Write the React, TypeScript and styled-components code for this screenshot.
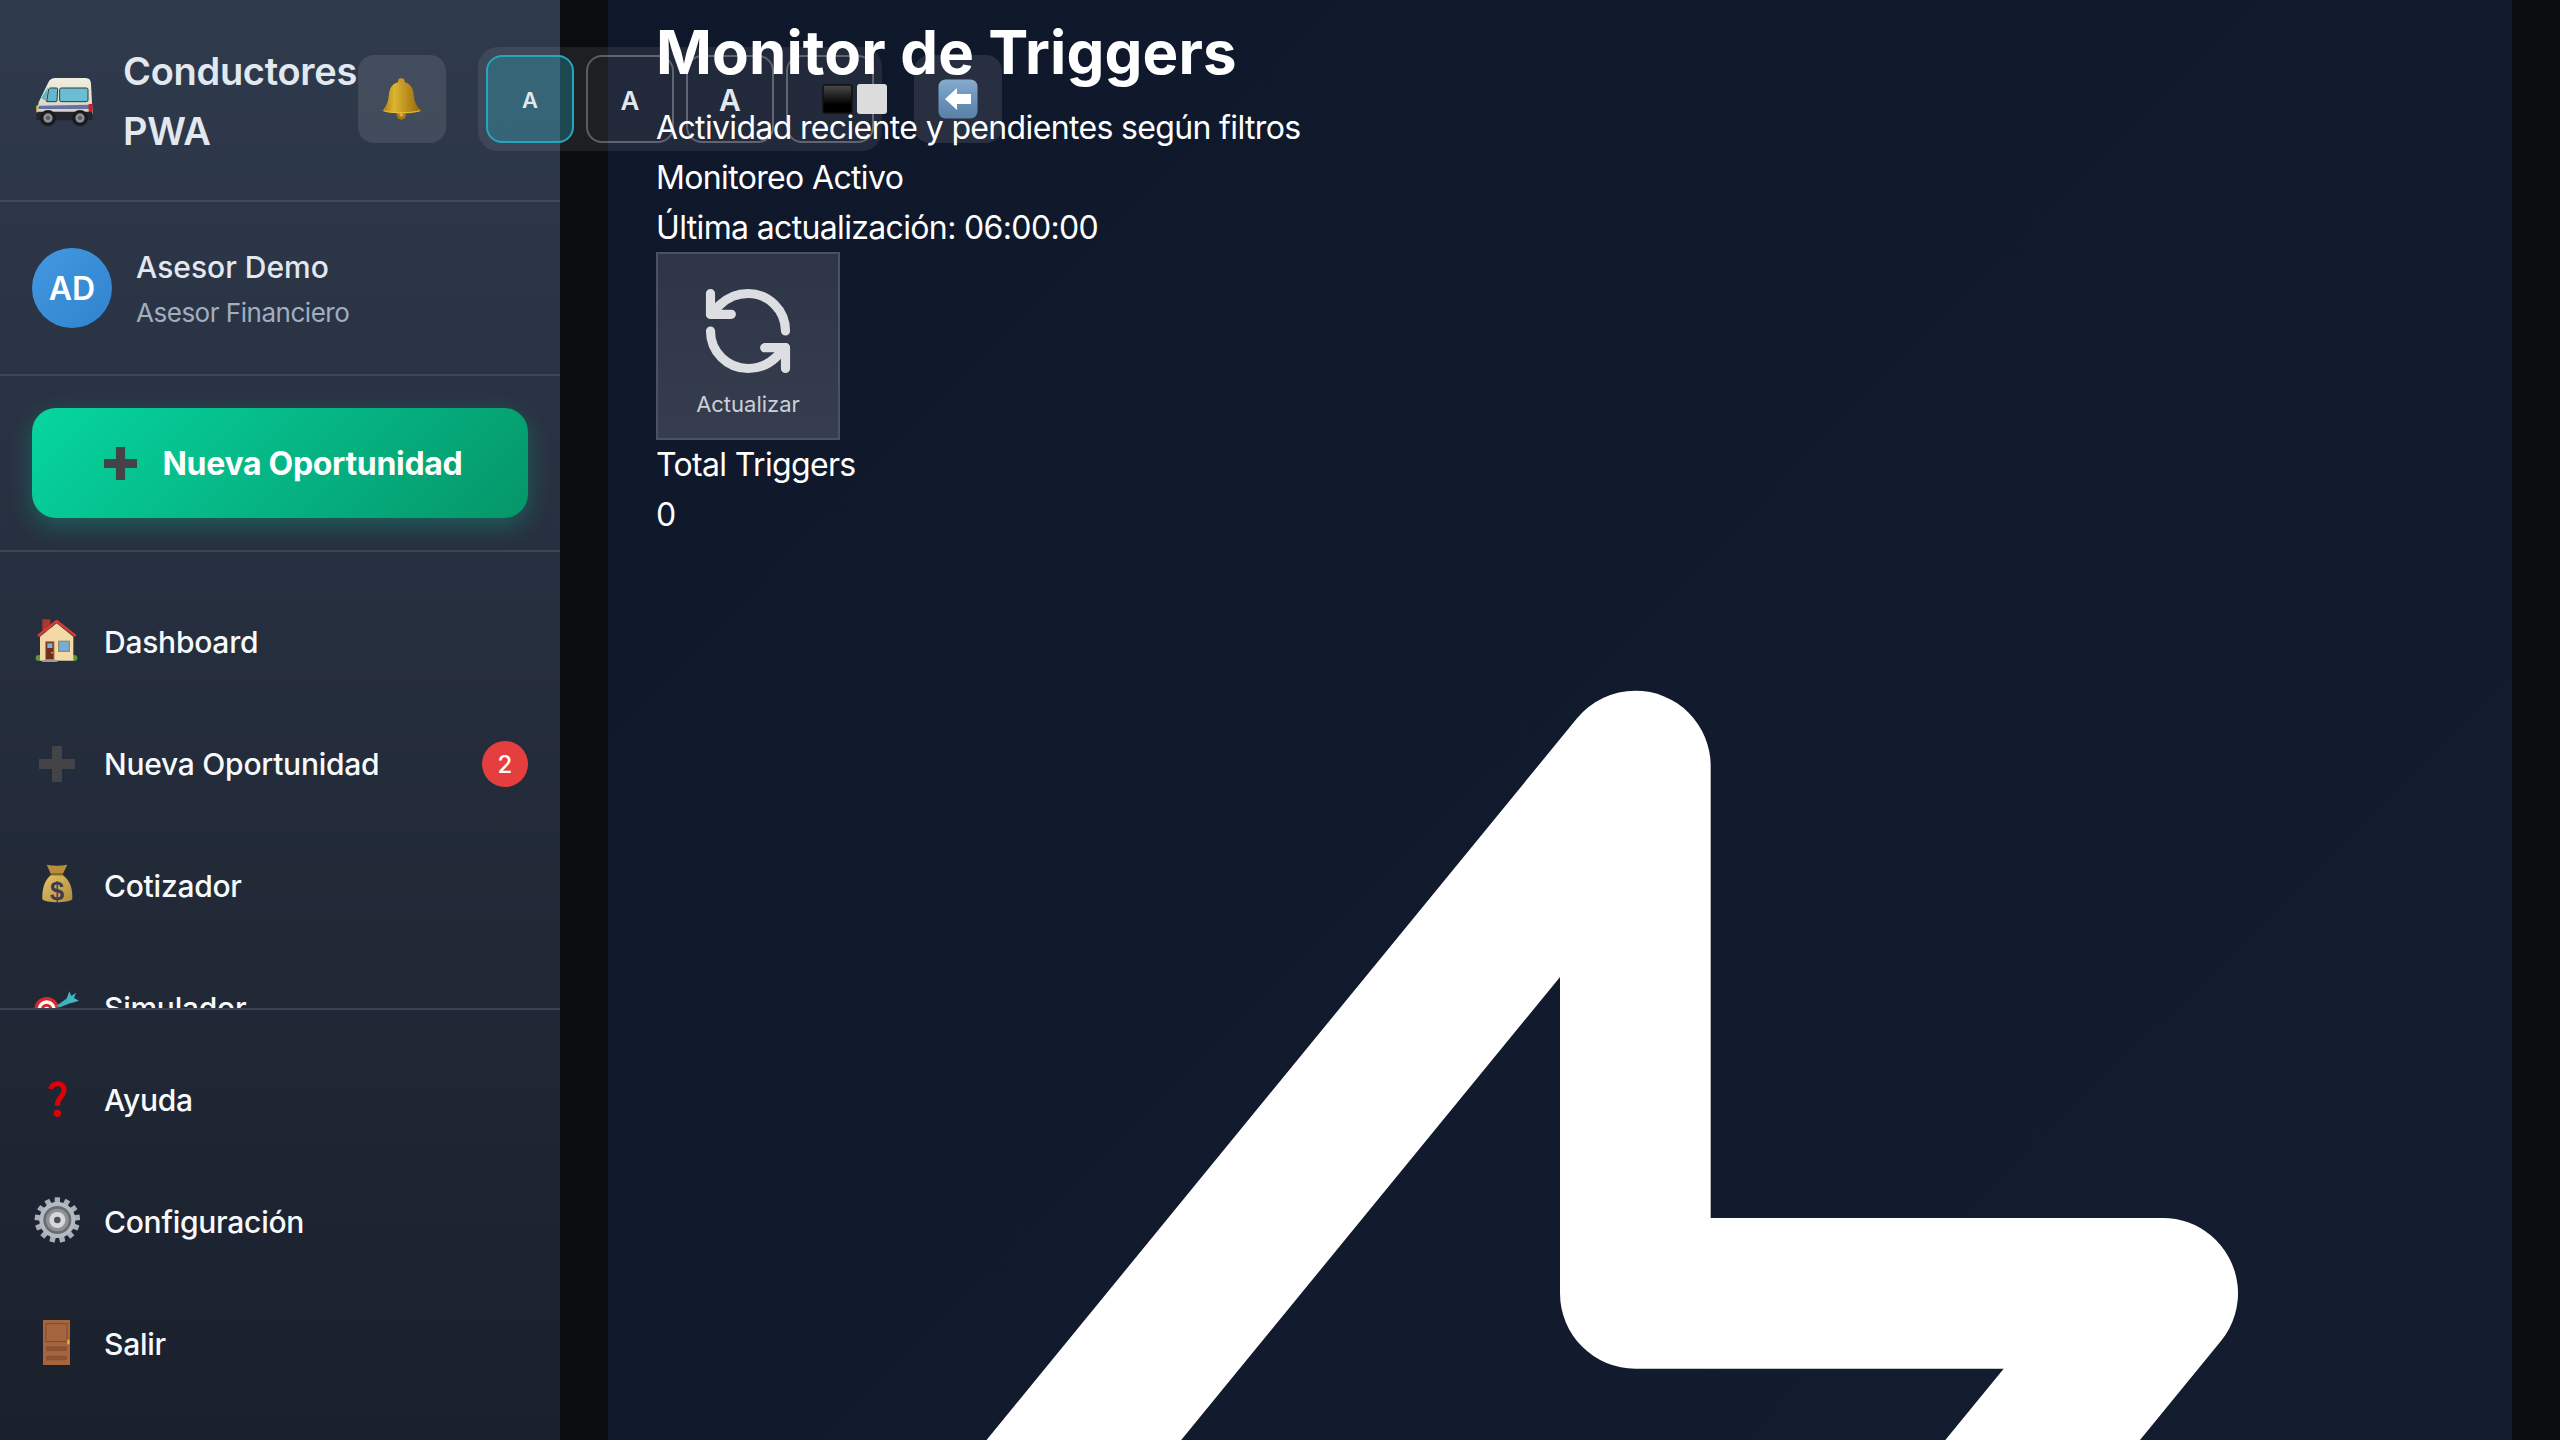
import React from "react";
import styled, { createGlobalStyle } from "styled-components";

const Global = createGlobalStyle`
  html, body { margin: 0; padding: 0; background: #0a0c10; }
  body { font-family: Inter, "Noto Sans", sans-serif; color: #fff; overflow: hidden; }
  * { box-sizing: border-box; }
`;

const Page = styled.div`
  display: flex;
  width: 2560px;
  height: 1440px;
  overflow: hidden;
`;

const Sidebar = styled.aside`
  position: relative;
  z-index: 1;
  flex: none;
  width: 560px;
  height: 1440px;
  display: flex;
  flex-direction: column;
  background: linear-gradient(180deg, #2f3a4c 0%, #1a202c 100%);
`;

const Section = styled.div`
  flex: none;
  border-bottom: 2px solid rgba(255, 255, 255, 0.1);
`;

const Header = styled(Section)`
  height: 202px;
  display: flex;
  align-items: center;
  padding: 0 0 2px 24px;
  gap: 32px;
`;

const Brand = styled.div`
  flex: none;
  display: flex;
  align-items: center;
  gap: 9px;
  width: 334px;
  margin-right: -32px;
`;

const BrandTitle = styled.h2`
  margin: 3px 0 0;
  width: 235px;
  font-size: 38px;
  font-weight: 600;
  letter-spacing: -0.3px;
  line-height: 60px;
  color: #e2e8f0;
`;

const IconButton = styled.div`
  flex: none;
  width: 88px;
  height: 88px;
  border-radius: 16px;
  background: rgba(255, 255, 255, 0.1);
  display: flex;
  align-items: center;
  justify-content: center;
`;

const ThemeGroup = styled.div`
  flex: none;
  display: flex;
  gap: 12px;
  padding: 8px;
  border-radius: 20px;
  background: rgba(255, 255, 255, 0.08);
`;

const ThemeButton = styled.div<{ $active?: boolean; $size?: number }>`
  flex: none;
  width: 88px;
  height: 88px;
  border-radius: 16px;
  border: 2px solid ${(p) => (p.$active ? "#22a7c0" : "rgba(255,255,255,0.28)")};
  background: ${(p) => (p.$active ? "rgba(34,180,200,0.28)" : "transparent")};
  color: #e2e8f0;
  font-size: ${(p) => p.$size ?? 24}px;
  font-weight: 600;
  padding-top: 2px;
  display: flex;
  align-items: center;
  justify-content: center;
`;

const ContrastButton = styled(ThemeButton)`
  justify-content: flex-start;
  padding: 0 0 0 34px;
`;

const UserRow = styled(Section)`
  height: 174px;
  display: flex;
  align-items: center;
  gap: 24px;
  padding: 0 32px;
`;

const Avatar = styled.div`
  flex: none;
  width: 80px;
  height: 80px;
  border-radius: 50%;
  background: linear-gradient(135deg, #4299e1, #3182ce);
  color: #fff;
  font-size: 32px;
  font-weight: 600;
  display: flex;
  align-items: center;
  justify-content: center;
`;

const UserText = styled.div`
  padding-top: 4px;
`;

const UserName = styled.div`
  font-size: 30px;
  font-weight: 500;
  line-height: 46px;
  color: #e2e8f0;
`;

const UserRole = styled.div`
  font-size: 26px;
  letter-spacing: -0.48px;
  line-height: 46px;
  color: #a0aec0;
`;

const CtaWrap = styled(Section)`
  height: 176px;
  padding: 32px;
`;

const Cta = styled.div`
  height: 110px;
  border-radius: 24px;
  background: linear-gradient(135deg, #06d6a0 0%, #059669 100%);
  box-shadow: 0 8px 24px rgba(6, 214, 160, 0.28);
  display: flex;
  align-items: center;
  justify-content: center;
  gap: 26px;
  padding-left: 6px;
  font-size: 32px;
  font-weight: 700;
  letter-spacing: -0.3px;
  color: #fff;
`;

const Nav = styled.nav<{ $grow?: boolean }>`
  display: flex;
  flex-direction: column;
  gap: 6px;
  padding: 32px 32px 32px 24px;
  ${(p) => (p.$grow ? "flex: none; height: 458px; overflow: hidden; border-bottom: 2px solid #3a4354;" : "flex: none;")}
`;

const NavRow = styled.div`
  flex: none;
  height: 116px;
  display: flex;
  align-items: center;
  gap: 10px;
`;

const NavLabel = styled.span`
  flex: 1;
  font-size: 30px;
  font-weight: 500;
  letter-spacing: -0.25px;
  color: #f7fafc;
`;

const Badge = styled.span`
  flex: none;
  width: 46px;
  height: 46px;
  border-radius: 50%;
  background: #e53e3e;
  color: #fff;
  font-size: 24px;
  font-weight: 500;
  display: flex;
  align-items: center;
  justify-content: center;
`;

const MainOuter = styled.main`
  flex: 1;
  min-width: 0;
  height: 1440px;
  padding: 0 48px;
  background: #0a0c10;
`;

const MainPanel = styled.div`
  height: 1440px;
  padding: 0 48px;
  overflow: hidden;
  background: linear-gradient(135deg, #0f172a 0%, #141d30 100%);
`;

const MainContent = styled.div`
  position: relative;
  z-index: 2;
`;

const Title = styled.h1`
  margin: 15px 0 13px;
  font-size: 60px;
  font-weight: 700;
  letter-spacing: 0.13px;
  line-height: 75px;
  color: #fff;
`;

const Line = styled.p`
  margin: 0;
  font-size: 32px;
  letter-spacing: -0.65px;
  line-height: 50px;
  color: #fff;
`;

const RefreshButton = styled.div`
  width: 184px;
  height: 188px;
  margin-top: -1px;
  background: linear-gradient(180deg, #2d3546, #363d4e);
  border: 2px solid #4a5264;
  display: flex;
  flex-direction: column;
  align-items: center;
  padding-top: 27px;
  gap: 3px;
  color: #dcdee2;
  font-size: 22px;
`;

const RefreshLabel = styled.span`
  color: #cbd0d8;
  line-height: 40px;
`;

const BigBolt = styled.svg`
  display: block;
  width: 1808px;
  height: 1808px;
  color: #fff;
`;

const Glyph = styled.svg<{ $w?: number; $h?: number }>`
  display: block;
  flex: none;
  width: ${(p) => p.$w ?? 70}px;
  height: ${(p) => p.$h ?? 70}px;
`;

const Bus = () => (
  <Glyph $w={90} $h={80} viewBox="0 0 270 240">
    <defs>
      <linearGradient id="busBody" x1="0" y1="0" x2="0" y2="1">
        <stop offset="0" stopColor="#f1ede0" />
        <stop offset="1" stopColor="#d6d2c2" />
      </linearGradient>
    </defs>
    <path d="M38 165 L44 130 L72 72 Q78 57 95 57 L185 57 Q201 57 201 75 L206 165 Z" fill="url(#busBody)" />
    <path d="M52 118 L72 84 L66 126 Z" fill="#5fb4c4" />
    <path d="M74 90 Q76 87 80 87 L98 87 Q101 87 101 91 L99 124 Q99 128 95 128 L68 128 Z" fill="#63b6cc" stroke="#2b3a44" strokeWidth="3" />
    <rect x="107" y="87" width="85" height="41" rx="5" fill="#6bbed2" stroke="#2b3a44" strokeWidth="3" />
    <path d="M44 140 L195 137 L195 150 L42 150 Z" fill="#6672a6" />
    <rect x="194" y="135" width="11" height="25" fill="#e8101c" />
    <rect x="37" y="158" width="168" height="26" rx="5" fill="#23252a" />
    <circle cx="72" cy="177" r="24" fill="#1a1b1f" />
    <circle cx="72" cy="177" r="14" fill="#8d9094" />
    <circle cx="72" cy="177" r="6" fill="#55585c" />
    <circle cx="168" cy="177" r="24" fill="#1a1b1f" />
    <circle cx="168" cy="177" r="14" fill="#8d9094" />
    <circle cx="168" cy="177" r="6" fill="#55585c" />
    <path d="M37 140 L43 138 L42 160 L37 160 Z" fill="#f3c14b" />
  </Glyph>
);

const Bell = () => (
  <Glyph viewBox="-9 15 210 210">
    <defs>
      <linearGradient id="bellG" x1="0" y1="0" x2="1" y2="0">
        <stop offset="0" stopColor="#a87c12" />
        <stop offset="0.3" stopColor="#dcb532" />
        <stop offset="0.65" stopColor="#b88c1c" />
        <stop offset="1" stopColor="#8f660c" />
      </linearGradient>
    </defs>
    <circle cx="94" cy="68" r="10" fill="#c69b24" />
    <circle cx="94" cy="168" r="14" fill="#a8741a" />
    <circle cx="94" cy="167" r="6" fill="#e0a83a" />
    <path d="M94 69 C66 69 58 88 56 112 C54 134 46 144 37 156 C60 166 128 166 155 156 C142 144 134 134 132 112 C130 88 122 69 94 69 Z" fill="url(#bellG)" />
    <path d="M42 155 C65 163 125 163 150 155" fill="none" stroke="#e8c23c" strokeWidth="3" />
  </Glyph>
);

const Contrast = () => (
  <Glyph $w={66} $h={32} viewBox="0 0 66 32">
    <defs>
      <linearGradient id="blk" x1="0" y1="0" x2="0" y2="1">
        <stop offset="0" stopColor="#4a4a4a" />
        <stop offset="0.7" stopColor="#000" />
      </linearGradient>
    </defs>
    <rect x="1" y="2" width="29" height="28" rx="2" fill="url(#blk)" stroke="#111" strokeWidth="1.5" />
    <rect x="35" y="1" width="30" height="30" rx="3" fill="#dcdcdc" />
  </Glyph>
);

const BackArrow = () => (
  <Glyph $w={40} $h={40} viewBox="0 0 40 40">
    <defs>
      <linearGradient id="arr" x1="0" y1="0" x2="0" y2="1">
        <stop offset="0" stopColor="#86abcd" />
        <stop offset="0.5" stopColor="#6a94bc" />
        <stop offset="1" stopColor="#5a80a4" />
      </linearGradient>
    </defs>
    <rect x="0.5" y="0.5" width="39" height="39" rx="7" fill="url(#arr)" />
    <path d="M7 20 L19 9 L19 15 L33 15 L33 25 L19 25 L19 31 Z" fill="#fff" />
  </Glyph>
);

const House = () => (
  <Glyph viewBox="0 -9 210 210">
    <rect x="55" y="28" width="24" height="36" fill="#a8392c" />
    <circle cx="44" cy="144" r="9" fill="#5d9a35" />
    <circle cx="151" cy="144" r="9" fill="#5d9a35" />
    <path d="M48 80 L98 40 L148 80 L148 152 L48 152 Z" fill="#f2d9a6" />
    <path d="M42 78 L98 33 L155 78" fill="none" stroke="#d73b33" strokeWidth="8" strokeLinejoin="round" />
    <rect x="65" y="95" width="25" height="54" fill="#6e2d1e" stroke="#a9835a" strokeWidth="3" />
    <rect x="70" y="100" width="15" height="14" fill="#7db4dc" />
    <circle cx="84" cy="128" r="2.5" fill="#e8b93b" />
    <rect x="104" y="94" width="32" height="30" fill="#6fb0e0" stroke="#a08863" strokeWidth="4" />
    <rect x="54" y="150" width="46" height="6" fill="#9c9c9c" />
  </Glyph>
);

const Plus = ({ size = 36 }: { size?: number }) => (
  <Glyph $w={size} $h={size} viewBox="0 0 36 36">
    <path d="M13 0 H23 V13 H36 V23 H23 V36 H13 V23 H0 V13 H13 Z" fill="#444448" />
  </Glyph>
);

const PlusSlot = styled.div`
  flex: none;
  width: 66px;
  height: 70px;
  margin-right: 4px;
  display: flex;
  align-items: center;
  justify-content: center;
`;

const Bag = () => (
  <Glyph viewBox="0 3 210 210">
    <defs>
      <linearGradient id="bagG" x1="0" y1="0" x2="1" y2="1">
        <stop offset="0" stopColor="#e6c468" />
        <stop offset="1" stopColor="#b08a3a" />
      </linearGradient>
    </defs>
    <path d="M68 44 Q98 50 130 44 L115 75 L82 75 Z" fill="#b68f3e" />
    <path d="M80 76 L117 76 C140 92 146 120 145 148 C135 160 64 160 55 148 C54 120 60 92 80 76 Z" fill="url(#bagG)" />
    <path d="M80 72 H117" stroke="#7d5f22" strokeWidth="5" />
    <text x="99" y="150" textAnchor="middle" fontFamily="'Liberation Sans', sans-serif" fontSize="76" fontWeight="700" fill="#3c3c50">$</text>
  </Glyph>
);

const Dart = () => (
  <Glyph viewBox="0 369 210 210">
    <circle cx="68" cy="478" r="37" fill="#d62a2a" />
    <circle cx="68" cy="478" r="27" fill="#fff" />
    <circle cx="68" cy="478" r="17" fill="#d62a2a" />
    <circle cx="68" cy="478" r="8" fill="#fff" />
    <path d="M97 468 L130 444 L142 458 L108 472 Z" fill="#3fb1c0" />
    <path d="M128 446 L136 424 L142 438 L156 428 L150 444 L165 452 L140 460 Z" fill="#43b6c4" />
  </Glyph>
);

const Help = () => (
  <Glyph viewBox="0 0 210 210">
    <path d="M80 72 C84 50 124 50 120 78 C118 96 100 96 100 122" fill="none" stroke="#e00008" strokeWidth="15" />
    <circle cx="100" cy="145" r="11" fill="#e00008" />
  </Glyph>
);

const Gear = () => {
  const teeth = Array.from({ length: 13 }, (_, i) => (i * 360) / 13);
  return (
    <Glyph viewBox="0 -9 210 210">
      {teeth.map((a) => (
        <rect key={a} x="92" y="22" width="16" height="24" fill="#a9afb6" transform={`rotate(${a} 100 90)`} />
      ))}
      <circle cx="100" cy="90" r="54" fill="#b4bac1" />
      <circle cx="100" cy="90" r="42" fill="#6a6d72" />
      <circle cx="100" cy="90" r="34" fill="#8f9297" />
      <circle cx="100" cy="90" r="24" fill="#d5d9de" />
      <circle cx="100" cy="90" r="10" fill="#4d4f55" />
    </Glyph>
  );
};

const Door = () => (
  <Glyph viewBox="0 0 210 210">
    <rect x="57" y="33" width="81" height="135" fill="#a5663f" />
    <rect x="66" y="44" width="63" height="54" fill="none" stroke="#7e4a2a" strokeWidth="3" />
    <rect x="66" y="112" width="63" height="14" fill="#8a5230" />
    <rect x="66" y="140" width="63" height="14" fill="#8a5230" />
    <rect x="130" y="92" width="6" height="14" fill="#e5bd3c" />
  </Glyph>
);

const RefreshIcon = () => (
  <svg width="100" height="100" viewBox="0 0 24 24" fill="none" stroke="currentColor" strokeWidth="2.2" strokeLinecap="round" strokeLinejoin="round">
    <path d="M21 12a9 9 0 0 0-9-9 9.75 9.75 0 0 0-6.74 2.74L3 8" />
    <path d="M3 3v5h5" />
    <path d="M3 12a9 9 0 0 0 9 9 9.75 9.75 0 0 0 6.74-2.74L21 16" />
    <path d="M16 16h5v5" />
  </svg>
);

export default function App() {
  return (
    <Page>
      <Global />
      <Sidebar>
        <Header>
          <Brand>
            <Bus />
            <BrandTitle>Conductores PWA</BrandTitle>
          </Brand>
          <IconButton>
            <Bell />
          </IconButton>
          <ThemeGroup>
            <ThemeButton $active $size={22}>A</ThemeButton>
            <ThemeButton $size={26}>A</ThemeButton>
            <ThemeButton $size={30}>A</ThemeButton>
            <ContrastButton>
              <Contrast />
            </ContrastButton>
          </ThemeGroup>
          <IconButton>
            <BackArrow />
          </IconButton>
        </Header>
        <UserRow>
          <Avatar>AD</Avatar>
          <UserText>
            <UserName>Asesor Demo</UserName>
            <UserRole>Asesor Financiero</UserRole>
          </UserText>
        </UserRow>
        <CtaWrap>
          <Cta>
            <Plus size={33} />
            <span>Nueva Oportunidad</span>
          </Cta>
        </CtaWrap>
        <Nav $grow>
          <NavRow>
            <House />
            <NavLabel>Dashboard</NavLabel>
          </NavRow>
          <NavRow>
            <PlusSlot>
              <Plus />
            </PlusSlot>
            <NavLabel>Nueva Oportunidad</NavLabel>
            <Badge>2</Badge>
          </NavRow>
          <NavRow>
            <Bag />
            <NavLabel>Cotizador</NavLabel>
          </NavRow>
          <NavRow>
            <Dart />
            <NavLabel>Simulador</NavLabel>
          </NavRow>
        </Nav>
        <Nav>
          <NavRow>
            <Help />
            <NavLabel>Ayuda</NavLabel>
          </NavRow>
          <NavRow>
            <Gear />
            <NavLabel>Configuración</NavLabel>
          </NavRow>
          <NavRow>
            <Door />
            <NavLabel>Salir</NavLabel>
          </NavRow>
        </Nav>
      </Sidebar>
      <MainOuter>
        <MainPanel>
          <MainContent>
            <Title>Monitor de Triggers</Title>
            <Line>Actividad reciente y pendientes según filtros</Line>
            <Line>Monitoreo Activo</Line>
            <Line>Última actualización: 06:00:00</Line>
            <RefreshButton>
              <RefreshIcon />
              <RefreshLabel>Actualizar</RefreshLabel>
            </RefreshButton>
            <Line>Total Triggers</Line>
            <Line>0</Line>
            <BigBolt viewBox="0 0 24 24" fill="none" stroke="currentColor" strokeWidth="2" strokeLinecap="round" strokeLinejoin="round">
              <path d="M13 10V3L4 14h7v7l9-11h-7z" />
            </BigBolt>
          </MainContent>
        </MainPanel>
      </MainOuter>
    </Page>
  );
}
